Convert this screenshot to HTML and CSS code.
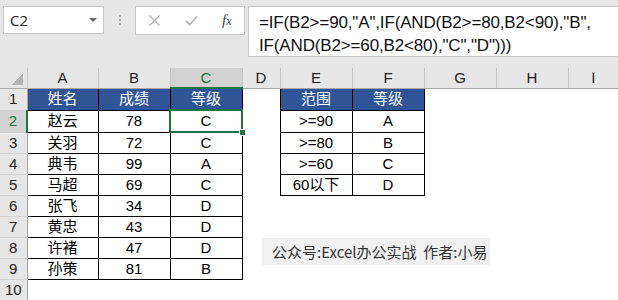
FILE: index.html
```html
<!DOCTYPE html>
<html lang="zh-CN">
<head>
  <meta charset="UTF-8">
  <title>IF 等级判断</title>
  <link rel="stylesheet" href="styles.css">
</head>
<body>

  <!-- Name box + formula bar -->
  <div class="toolbar">
    <div class="name-box"><span>C2</span><span class="caret"></span></div>
    <div class="grip"><i></i><i></i><i></i></div>
    <div class="fx-buttons">
      <svg class="icon" viewBox="0 0 13 13"><path d="M1.5 1.5 L11.5 11.5 M11.5 1.5 L1.5 11.5" stroke="#b4b4b4" stroke-width="1.4" fill="none"/></svg>
      <svg class="icon" viewBox="0 0 13 13"><path d="M1 7 L4.8 10.5 L12 2.5" stroke="#b4b4b4" stroke-width="1.8" fill="none"/></svg>
      <span class="fx"><i>f</i><i class="x">x</i></span>
    </div>
    <div class="formula">=IF(B2&gt;=90,"A",IF(AND(B2&gt;=80,B2&lt;90),"B",<br>IF(AND(B2&gt;=60,B2&lt;80),"C","D")))</div>
  </div>

  <!-- Worksheet -->
  <div class="sheet">
    <table class="grid">
      <colgroup>
        <col style="width:27px"><col style="width:71px"><col style="width:72px"><col style="width:72px">
        <col style="width:38px"><col style="width:72px"><col style="width:72px"><col style="width:72px">
        <col style="width:72px"><col style="width:50px">
      </colgroup>
      <thead>
        <tr>
          <th class="corner"></th>
          <th>A</th><th>B</th><th class="col-on">C</th><th>D</th><th>E</th><th>F</th><th>G</th><th>H</th><th class="last">I</th>
        </tr>
      </thead>
      <tbody>
        <tr><th>1</th><td class="b hd">姓名</td><td class="b hd">成绩</td><td class="b hd">等级</td><td></td><td class="b hd">范围</td><td class="b hd">等级</td><td></td><td></td><td></td></tr>
        <tr><th class="row-on">2</th><td class="b">赵云</td><td class="b">78</td><td class="b sel">C</td><td></td><td class="b">&gt;=90</td><td class="b">A</td><td></td><td></td><td></td></tr>
        <tr><th>3</th><td class="b">关羽</td><td class="b">72</td><td class="b">C</td><td></td><td class="b">&gt;=80</td><td class="b">B</td><td></td><td></td><td></td></tr>
        <tr><th>4</th><td class="b">典韦</td><td class="b">99</td><td class="b">A</td><td></td><td class="b">&gt;=60</td><td class="b">C</td><td></td><td></td><td></td></tr>
        <tr><th>5</th><td class="b">马超</td><td class="b">69</td><td class="b">C</td><td></td><td class="b">60以下</td><td class="b">D</td><td></td><td></td><td></td></tr>
        <tr><th>6</th><td class="b">张飞</td><td class="b">34</td><td class="b">D</td><td></td><td></td><td></td><td></td><td></td><td></td></tr>
        <tr><th>7</th><td class="b">黄忠</td><td class="b">43</td><td class="b">D</td><td></td><td></td><td></td><td></td><td></td><td></td></tr>
        <tr><th>8</th><td class="b">许褚</td><td class="b">47</td><td class="b">D</td><td></td><td></td><td></td><td></td><td></td><td></td></tr>
        <tr><th>9</th><td class="b">孙策</td><td class="b">81</td><td class="b">B</td><td></td><td></td><td></td><td></td><td></td><td></td></tr>
        <tr><th>10</th><td></td><td></td><td></td><td></td><td></td><td></td><td></td><td></td><td></td></tr>
      </tbody>
    </table>

    <!-- floating text box -->
    <div class="note">公众号:Excel办公实战&nbsp; 作者:小易</div>
  </div>

</body>
</html>
```

FILE: styles.css
```css
body {
  margin: 0;
  width: 618px;
  height: 300px;
  overflow: hidden;
  background: #fff;
  font-family: "Liberation Sans", "Noto Sans CJK SC", sans-serif;
}

/* Top bar */
.toolbar {
  height: 68px;
  box-sizing: border-box;
  padding: 6px 0 0 3px;
  background: #e6e6e6;
  display: flex;
  align-items: flex-start;
}

.name-box {
  width: 101px;
  height: 28px;
  box-sizing: border-box;
  padding: 0 6px 0 6px;
  background: #fff;
  border: 1px solid #c6c6c6;
  display: flex;
  align-items: center;
  justify-content: space-between;
  font-family: "Open Sans", sans-serif;
  font-size: 15px;
  color: #222;
}

.caret {
  border-left: 4px solid transparent;
  border-right: 4px solid transparent;
  border-top: 4px solid #6a6a6a;
}

.grip {
  width: 31px;
  height: 28px;
  display: flex;
  flex-direction: column;
  align-items: center;
  justify-content: center;
  gap: 2px;
}

.grip i {
  width: 2px;
  height: 2px;
  background: #a6a6a6;
}

.fx-buttons {
  width: 110px;
  height: 29px;
  box-sizing: border-box;
  padding-left: 12px;
  background: #fff;
  border: 1px solid #c6c6c6;
  display: flex;
  align-items: center;
  gap: 24px;
}

.icon {
  width: 13px;
  height: 13px;
}

.fx {
  font-family: "Liberation Serif", serif;
  font-size: 15px;
  color: #444;
}

.fx .x {
  font-size: 12px;
}

.formula {
  flex: 1;
  margin-left: 3px;
  height: 51px;
  box-sizing: border-box;
  padding: 4px 0 0 10px;
  background: #fff;
  border: 1px solid #c6c6c6;
  border-right: none;
  font-size: 17px;
  line-height: 23px;
  letter-spacing: -0.15px;
  color: #111;
  white-space: nowrap;
}

/* Worksheet grid */
.sheet {
  position: relative;
}

.grid {
  width: 618px;
  table-layout: fixed;
  border-collapse: collapse;
  font-size: 15px;
}

.grid th,
.grid td {
  padding: 0;
  height: 20px;
  line-height: 18px;
  text-align: center;
  white-space: nowrap;
}

.grid thead th {
  height: 19px;
  background: #e6e6e6;
  font-weight: normal;
  color: #222;
  border-right: 1px solid #c4c4c4;
  border-bottom: 1px solid #a8a8a8;
}

.grid thead th.last {
  border-right: none;
}

.grid tbody th {
  background: #e6e6e6;
  font-weight: normal;
  color: #222;
  border-right: 1px solid #a8a8a8;
  border-bottom: 1px solid #d2d2d2;
}

.grid th.corner {
  background: #e6e6e6 linear-gradient(to top left, #b4b4b4 50%, transparent 50%) no-repeat right 4px bottom 3px / 12px 12px;
}

.b {
  border: 1px solid #000;
}

.hd {
  background: #2f5597;
  color: #fff;
}

.grid thead th.col-on {
  background: #d2d2d2;
  color: #217346;
  border-bottom: 2px solid #217346;
}

.grid tbody th.row-on {
  background: #d2d2d2;
  color: #217346;
  border-right: 2px solid #217346;
}

.sel {
  position: relative;
  border: 2px solid #217346;
}

.sel::after {
  content: "";
  position: absolute;
  right: -5px;
  bottom: -5px;
  width: 5px;
  height: 5px;
  background: #217346;
  border: 1px solid #fff;
}

/* floating text box */
.note {
  position: absolute;
  left: 262px;
  top: 170px;
  width: 228px;
  height: 27px;
  box-sizing: border-box;
  padding-left: 10px;
  background: #f0f0f0;
  font-family: "Noto Sans CJK SC", sans-serif;
  font-size: 15px;
  line-height: 27px;
  color: #333;
}
```
